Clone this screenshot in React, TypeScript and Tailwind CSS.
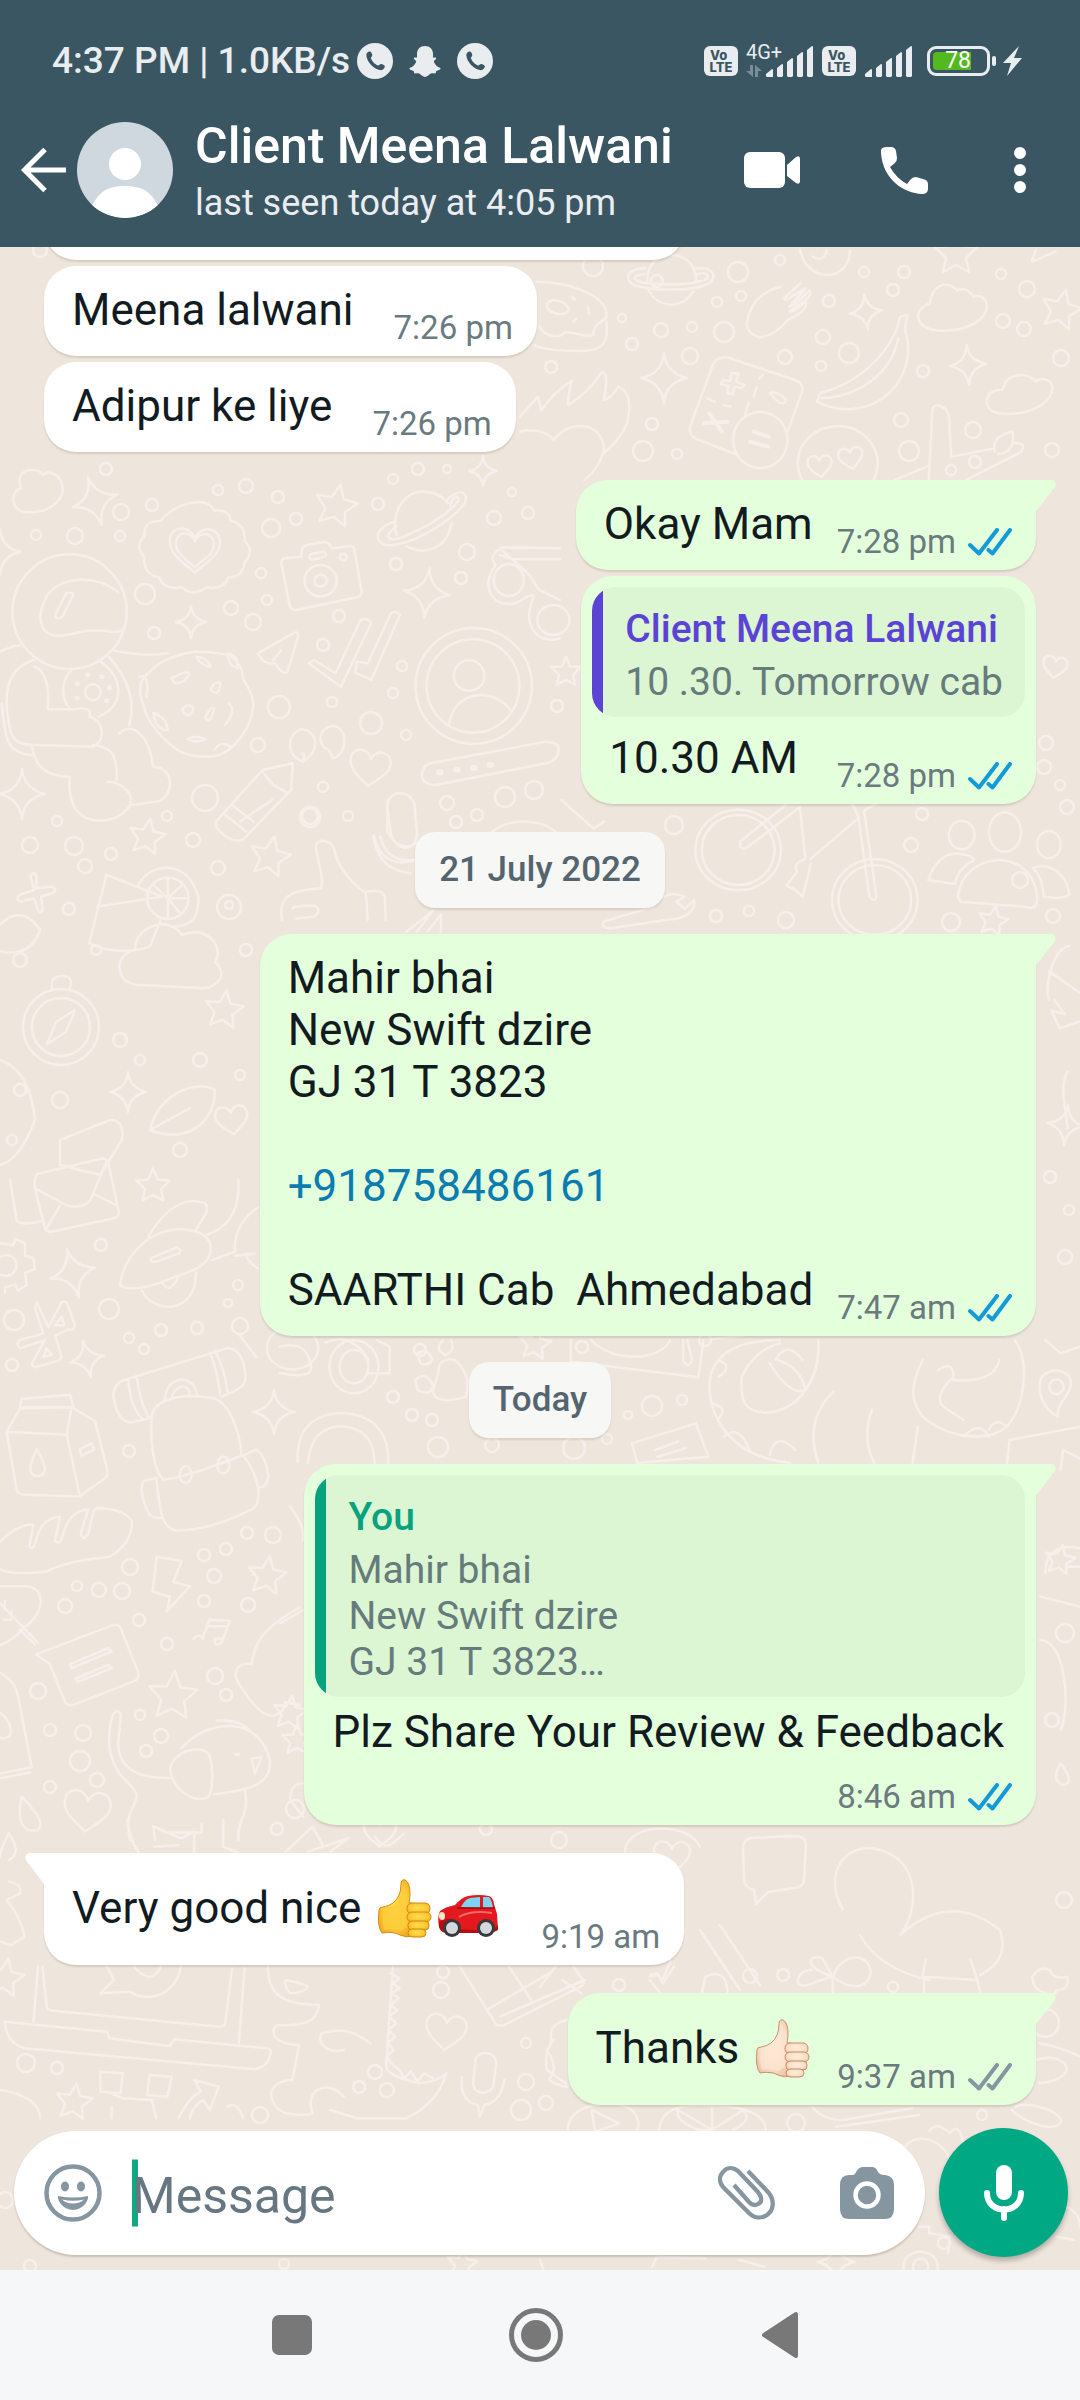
import React from "react";

/* ---------- Wallpaper ---------- */

type Mark = [x: number, y: number, scale: number, turn: number];

const STARS: Mark[] = [
  [336, 506, 1, 12], [147, 837, 0.85, 10], [270, 857, 0.95, 12], [153, 1186, 0.8, 0], [267, 1576, 0.9, 8],
  [173, 1696, 1.15, 4], [297, 1740, 0.7, 0], [1061, 310, 0.95, 14], [956, 254, 1, 0], [993, 921, 0.7, 12],
  [535, 1344, 0.75, 8], [290, 1713, 0.8, 8], [74, 2102, 0.85, 8], [5, 1978, 0.9, 10], [566, 672, 0.7, 0],
  [1060, 1560, 0.7, 10], [462, 2264, 0.7, 8], [224, 1010, 0.9, 8],
];

const SPARKS: Mark[] = [
  [95, 501, 1, -16], [191, 622, 0.65, 0], [427, 593, 1, 6], [22, 794, 1, 0], [483, 471, 0.6, 0],
  [0, 552, 0.9, 0], [73, 1273, 1, -14], [87, 1359, 0.75, -12], [274, 1412, 0.9, 0], [866, 312, 0.7, -6],
  [664, 378, 1, 0], [968, 365, 0.8, -4], [836, 2262, 0.8, 0], [1066, 1125, 0.8, 6], [128, 1092, 0.8, 0],
];

const HEARTS: Mark[] = [
  [370, 768, 1, 6], [446, 2032, 1, 6], [87, 1811, 1.15, 6], [195, 550, 1.25, 0], [195, 550, 0.95, 0],
  [820, 466, 0.6, -6], [851, 458, 0.6, -10], [380, 1832, 0.8, 0], [1055, 667, 0.6, 8], [672, 1857, 0.9, 0],
  [232, 1120, 0.8, -8],
];

const DOTS: [number, number, number][] = [
  [40, 250, 7], [106, 469, 6], [121, 512, 8], [152, 505, 6], [75, 536, 8], [36, 535, 5], [120, 536, 5], [218, 490, 5],
  [246, 486, 7], [278, 497, 6], [271, 528, 9], [296, 519, 6], [145, 594, 10], [261, 573, 5], [231, 608, 7],
  [253, 622, 8], [154, 633, 6], [267, 600, 5], [339, 616, 6], [396, 564, 6], [378, 504, 6], [393, 479, 5],
  [418, 469, 6], [447, 469, 4], [494, 518, 7], [528, 513, 6], [512, 492, 4], [467, 552, 8], [461, 578, 6],
  [323, 645, 6], [402, 666, 5], [393, 693, 5], [332, 702, 5], [279, 707, 11], [371, 723, 11], [406, 735, 5],
  [258, 745, 7], [205, 798, 13], [323, 787, 5], [310, 817, 10], [348, 816, 5], [167, 816, 5], [193, 840, 7],
  [57, 821, 5], [30, 845, 8], [74, 846, 9], [111, 854, 6], [85, 866, 7], [218, 868, 7], [69, 909, 6],
  [505, 797, 10], [534, 790, 9], [447, 803, 7], [456, 822, 6], [477, 815, 6], [229, 907, 12], [229, 905, 4],
  [593, 266, 10], [657, 281, 6], [738, 272, 10], [780, 260, 5], [717, 302, 5], [741, 296, 5], [622, 318, 4],
  [661, 330, 7], [692, 327, 5], [724, 332, 10], [632, 344, 6], [690, 356, 8], [785, 357, 7], [823, 337, 7],
  [849, 353, 10], [821, 366, 5], [829, 301, 6], [864, 272, 5], [904, 272, 6], [893, 290, 6], [1001, 274, 5],
  [1027, 289, 8], [1003, 321, 7], [1024, 329, 7], [1061, 358, 8], [923, 371, 6], [551, 367, 6], [652, 424, 6],
  [643, 451, 10], [677, 454, 5], [901, 420, 7], [973, 430, 8], [909, 451, 10], [1052, 450, 7], [975, 462, 6],
  [951, 470, 5], [1046, 743, 7], [1044, 767, 7], [1060, 785, 5], [1067, 807, 7], [557, 706, 6], [310, 816, 8],
  [674, 825, 9], [911, 845, 7], [922, 814, 6], [716, 916, 6],
  [749, 911, 5], [786, 920, 8], [951, 922, 9], [1053, 916, 7], [1050, 1177, 6], [1069, 1210, 5], [1065, 1257, 7],
  [101, 1245, 6], [109, 1309, 10], [14, 1320, 10], [238, 1285, 5], [228, 1303, 4], [240, 1326, 8], [197, 1328, 6],
  [161, 1330, 6], [129, 1338, 5], [144, 1349, 5], [12, 1365, 6], [129, 1451, 6], [247, 1533, 6], [273, 1535, 8],
  [226, 1549, 6], [204, 1555, 6], [130, 1567, 8], [214, 1576, 7], [77, 1586, 5], [99, 1590, 7], [122, 1591, 8],
  [65, 1606, 7], [204, 1601, 6], [248, 1605, 7], [139, 1620, 6], [167, 1644, 6], [215, 1676, 8], [226, 1695, 6],
  [38, 1691, 8], [140, 1715, 5], [161, 1736, 7], [146, 1751, 6], [50, 1730, 6], [83, 1733, 8], [80, 1761, 10],
  [50, 1787, 6], [97, 1780, 7], [295, 1809, 9], [277, 1829, 6], [393, 1397, 6], [412, 1415, 6], [432, 1420, 6],
  [438, 1447, 10], [492, 1445, 7], [574, 1448, 11], [607, 1439, 5], [628, 1415, 4], [652, 1406, 10], [682, 1400, 5],
  [1065, 1633, 9], [486, 1829, 6], [559, 1840, 8], [443, 1972, 6], [441, 1990, 8],
  [619, 1985, 6], [526, 2043, 5], [26, 2063, 9], [57, 2068, 6], [375, 2072, 7], [359, 2087, 6], [387, 2090, 7],
  [526, 2082, 8], [546, 2103, 7], [521, 2110, 10], [750, 1976, 7], [783, 1975, 6], [893, 1987, 5],
  [796, 2123, 9], [982, 2115, 5], [1045, 2023, 14], [260, 2115, 8], [284, 2264, 5], [30, 2266, 6], [944, 2243, 6],
  [5, 2200, 8], [1064, 1900, 8], [1052, 1720, 7], [705, 1340, 6], [582, 1347, 6], [420, 1350, 6], [1020, 880, 8],
  [20, 960, 7], [96, 950, 5], [120, 1040, 7], [140, 1060, 5], [20, 1090, 6], [60, 1100, 8], [200, 1060, 7],
  [240, 1075, 5], [180, 1150, 7], [12, 1140, 5], [246, 950, 6],
];

const STAR = "M0-22 6-8 21-7 10 4 13 18 0 11-13 18-10 4-21-7-6-8Z";
const SPARK = "M0-25Q2-5 23 0 2 4 0 25-3 4-23 0-2-4 0-25Z";
const HEART = "M0 18C-10 10-22 2-20-9-18-20-4-20 0-9 5-21 20-18 20-6 20 4 9 10 0 18Z";

function Marks({ items, d }: { items: Mark[]; d: string }) {
  return (
    <>
      {items.map(([x, y, s, r], i) => (
        <path key={i} d={d} transform={`translate(${x} ${y}) rotate(${r}) scale(${s})`} />
      ))}
    </>
  );
}

function Wallpaper() {
  return (
    <svg
      aria-hidden="true"
      className="absolute inset-x-0 top-0 h-full w-full [&_*]:[vector-effect:non-scaling-stroke]"
      viewBox="0 247 1080 2023"
      preserveAspectRatio="xMidYMin slice"
      fill="none"
      stroke="#f7efea"
      strokeWidth="2.500"
      strokeLinecap="round"
      strokeLinejoin="round"
    >
      <Marks items={STARS} d={STAR} />
      <Marks items={SPARKS} d={SPARK} />
      <Marks items={HEARTS} d={HEART} />
      {DOTS.map(([x, y, r], i) => (
        <circle key={i} cx={x} cy={y} r={r} />
      ))}

      {/* cloud, cookie, astronaut, camera, planet, glasses */}
      <g transform="translate(0 460) scale(.357 .3333)">
        <path d="M60 85C30 90 22 155 80 157 150 158 185 110 173 70 165 40 130 30 122 45 105 20 55 25 55 60Q55 80 60 85Z" />
        <path d="M545 127q40-5 55 25 45-5 45 30 45 10 40 60 30 30 0 65-5 45-45 45-15 40-60 30-40 30-70 0-50 10-65-30-45-10-40-60-30-30 0-65-5-45 45-45 35-45 95-55Z" />
        <ellipse cx="195" cy="455" rx="160" ry="172" />
        <path d="M330 395C270 345 170 345 130 410 100 470 110 530 170 528 220 520 240 505 310 515q30 5 38-15M185 400q20-5 20 5l-30 65q-20 12-20-5ZM95 600C30 620 5 680 25 790 30 850 60 855 100 855L260 860C300 840 290 780 250 770 260 740 230 745 200 748H133C140 690 130 630 95 620M0 575Q30 560 55 555M320 572Q400 590 470 580M305 590C360 660 380 720 362 795M275 600C350 650 350 740 275 770M200 630C165 670 175 720 195 745M90 855C95 920 130 950 195 950 190 1040 220 1080 280 1083 340 1080 370 1040 367 1015 360 985 330 965 300 965M260 855C310 860 330 880 327 960M335 820C370 780 420 830 428 920 490 920 490 1010 440 1025L370 1035M5 730C15 820 10 880 90 885" />
        <ellipse cx="260" cy="697" rx="22" ry="24" />
        <path d="M245 645h1M285 650h1M306 683h1M216 671h1M215 714h1M298 722h1" strokeWidth="5" />
        <path d="M545 575q50 0 95 10 40 25 40 70 30 50 30 80-5 60-45 110-40 50-90 45-60 0-90-30-70-60-85-130-20-60 15-90 40-50 130-65ZM480 655q45-25 50-15-10 30-40 30ZM590 690q10-30 28-20-5 45-28 20ZM510 750q15-25 33-5-15 40-33 5ZM575 775q15-40 25-30-10 50-25 30ZM525 838q25-15 50 0-25 12-50 0ZM430 760q35 10 40 50-35 0-40-50ZM640 730q25 20-10 65M550 590q30 0 40 30-30-5-40-30ZM640 580q30 10 25 45-30-10-25-45ZM390 650q30-10 20 60M600 870q20-30 45-10" />
        <path d="M800 295 845 290Q840 260 860 255L910 245Q925 250 928 265L980 258Q990 258 993 270L1013 395Q1013 408 1000 412L830 450Q815 450 812 440L788 310Q788 296 800 295ZM870 282 905 275Q920 282 910 290L875 300Q860 295 870 282Z" />
        <ellipse cx="898" cy="362" rx="45" ry="47" />
        <ellipse cx="898" cy="362" rx="17" ry="18" />
        <ellipse cx="962" cy="291" rx="10" ry="10" />
        <path d="M1110 225C1095 150 1135 92 1190 95 1220 95 1240 110 1255 130M1265 190C1250 270 1190 285 1140 260M1105 185C1060 200 1050 230 1065 245 1080 265 1130 255 1185 225 1250 190 1305 140 1305 115 1305 90 1280 90 1250 122M1110 200C1060 240 1100 250 1150 220 1220 190 1290 130 1285 115 1275 100 1260 130 1262 140" />
        <path d="M1568 265 1405 262Q1375 285 1380 300L1388 315C1350 370 1370 435 1430 432 1460 430 1470 405 1495 405 1490 430 1475 460 1485 490 1500 540 1540 545 1568 535M1400 285 1440 298H1568M1405 270 1480 340 1510 390 1568 420" />
        <ellipse cx="1425" cy="360" rx="42" ry="48" />
        <ellipse cx="1550" cy="480" rx="45" ry="45" />
        {/* plane, ticks, avatar, quotes, pencil, thumb, glass */}
        <path d="M722 580 825 518Q838 515 835 530L805 635Q795 645 785 630L770 610 750 610 735 600ZM765 600 788 570" />
        <path d="M865 610 880 600 940 640 1010 480Q1030 470 1040 490L955 680ZM1000 605 1030 610 1095 460Q1110 450 1120 465L1040 660 995 638Z" />
        <ellipse cx="1327" cy="678" rx="163" ry="174" />
        <ellipse cx="1325" cy="678" rx="130" ry="140" />
        <ellipse cx="1314" cy="647" rx="43" ry="46" />
        <path d="M1258 790C1275 690 1380 680 1430 750" />
        <path d="M850 905C800 890 800 820 845 808 890 810 900 880 845 905Q860 880 845 880M932 895Q920 860 910 865C880 830 910 795 935 798 975 805 975 880 932 895Z" />
        <path d="M605 1085 735 930 820 910 815 990 680 1140Q640 1150 605 1100ZM735 935 765 975 800 995M650 1035 710 1085M625 1060 690 1115" />
        <path d="M1185 930Q1190 915 1205 910L1530 845Q1565 845 1565 870 1560 905 1530 910L1220 975C1185 975 1175 950 1185 930Z" />
        <path d="M1230 937h4M1278 929h4M1325 923h4M1372 914h4" strokeWidth="6" />
        <path d="M1085 1045C1080 985 1160 985 1162 1045L1168 1120C1165 1180 1105 1175 1095 1120ZM1045 1130C1060 1220 1110 1235 1150 1240M1065 1130C1080 1190 1110 1205 1165 1200" />
        <path d="M790 1380C780 1310 810 1290 900 1285 910 1250 880 1170 885 1155 895 1135 925 1140 935 1165 945 1220 980 1265 1025 1300L1030 1380M820 1345Q830 1335 880 1338 905 1350 880 1370L830 1375M1025 1295Q1070 1285 1078 1310L1080 1380" />
        <path d="M250 1450 298 1245 455 1310 272 1340M385 1280C420 1200 530 1200 555 1310 560 1380 530 1400 480 1400M250 1450Q330 1490 420 1460L450 1380" />
        <ellipse cx="470" cy="1315" rx="58" ry="62" />
        <path d="M470 1315V1255M470 1315 510 1275M470 1315H528M470 1315 505 1360M470 1315V1378M470 1315 430 1275" />
        <path d="M85 1250Q95 1230 102 1250V1285L145 1280Q165 1290 145 1300L115 1310 120 1350Q110 1365 105 1345L95 1315 60 1325Q40 1320 55 1305L95 1290Z" />
      </g>

      {/* compass, cloud, leaf sprig beside the long message */}
      <circle cx="61" cy="1027" r="38" />
      <circle cx="61" cy="1027" r="29" />
      <path d="M75 1010 66 1032 47 1044 56 1022ZM52 988Q50 976 62 976 74 976 70 988M-5 930Q20 900 40 930 30 960-5 950" />
      <path d="M140 985C115 985 112 955 135 950 135 925 170 915 182 935 205 925 225 945 215 962 230 975 215 990 200 988Z" />
      <path d="M150 1130C160 1090 200 1080 215 1090 215 1120 190 1145 150 1130ZM150 1130 190 1108M0 1060Q30 1070 35 1120 20 1160 0 1165M60 1140 110 1120Q125 1120 122 1140L100 1175 60 1165Z" />

      {/* top right: planet, burger, calculator, banana, clouds, smiley, cactus */}
      <g transform="translate(520 250) scale(.357 .3333)">
        <path d="M357 90C355 40 390 15 430 15 470 20 495 50 493 95M360 120C385 175 455 180 485 125M350 55C300 55 290 90 320 105 370 125 500 125 535 95 555 70 530 50 493 55M350 72C300 80 320 95 360 100 420 105 500 105 525 85 530 70 510 65 495 75" />
        <path d="M45 95C140 95 250 140 242 200 240 215 210 210 205 255 180 265 140 240 125 248 110 265 70 262 55 230M242 215C250 280 230 300 180 303 110 303 60 298 40 285M75 165C80 140 130 150 137 180 130 200 80 195 75 165ZM145 140 155 150M190 172 193 192M150 215 157 207" />
        <path d="M785 100 740 145Q745 155 760 140L800 115 755 170Q770 165 810 122 820 130 800 150 770 170 755 185 770 185 800 155 810 180 750 210 710 260 670 262 635 250 635 220 650 130 730 110 785 100Z" />
        <path d="M540 345Q550 320 580 322L770 390Q795 400 790 425L750 545M610 615 490 565Q470 550 478 525L540 345M592 370 612 370 605 395 630 405 620 415 600 410 595 432 580 430 585 408 562 402 568 390 590 393ZM700 430Q715 420 745 448 745 465 725 458ZM680 375 670 385M662 415 655 440M525 445 545 455M570 465 590 470M640 460 630 495" />
        <ellipse cx="673" cy="570" rx="76" ry="84" />
        <path d="M655 545 697 560M645 575 695 590M530 490 565 545M515 520 580 515" strokeWidth="4" />
        <path d="M1065 200 1085 195 1078 240C1110 330 1060 470 920 478 880 478 850 465 832 455L840 430C950 400 1020 320 1055 240ZM1060 265C1040 370 950 440 845 445" />
        <path d="M1148 160C1100 175 1100 240 1180 242 1260 245 1320 200 1305 155 1295 130 1270 140 1270 140 1250 105 1225 120 1225 120 1190 90 1155 105 1148 160ZM1350 420C1300 415 1290 480 1340 490 1420 500 1500 460 1490 405 1480 380 1450 385 1445 395 1420 360 1360 375 1355 410Z" />
        <ellipse cx="890" cy="640" rx="112" ry="112" />
        <path d="M1145 690 1155 480Q1160 455 1190 475 1205 490 1203 530L1208 620 1330 595M1050 690 1140 650M1330 605C1320 570 1350 550 1380 545 1385 580 1375 610 1340 612M1380 580Q1420 575 1405 605L1250 690" />
        <path d="M0 500 50 440Q55 460 60 482 90 430 145 392 135 430 135 465 190 430 230 365 250 370 235 450 260 440 275 410 320 430 300 520 280 570 235 610M0 545Q60 530 95 570 130 520 190 530 235 550 235 600 220 660 180 690" />
        <path d="M785 0C800 95 920 105 925 0M820 20Q850 40 860 0M1435 30 1445 0M1435 35 1500 5" />
      </g>

      {/* envelope, gear, rocket, milk, backpack, baguette, leaf, note, dog */}
      <g transform="translate(0 1180) scale(.3333 .4209)">
        <path d="M105 20 135 115Q140 125 155 123L345 90Q360 85 355 70L325-40Q320-55 300-50L115-15Q100-10 105 20L200 60Q240 70 270 50L320-45M140 115 180 60M285 35 350 60M30 0 50 95Q60 110 120 98" />
        <path d="M0 150 40 155 45 140 75 150V180L100 185 105 212 75 220 80 250 55 262 45 248 15 255V268M0 182Q45 170 50 205 40 235 0 225" />
        <path d="M360 250C370 190 430 125 530 117 620 115 640 150 630 175 620 205 580 215 520 232 450 255 390 265 360 250ZM445 135C500 60 560 40 615 55 635 70 600 100 588 118M425 262C460 320 590 320 588 220M620 130C700 110 720 60 715 0M635 190 705 170C700 120 740 80 775 65M705 180 765 175 735 175Q750 200 775 210M455 185 530 160Q550 168 535 175L465 195Q445 195 455 185ZM485 242Q510 275 535 230" />
        <path d="M110 290 145 350 185 290Q200 285 205 300L225 345Q220 360 205 355L165 370 185 420Q180 430 165 432L105 445Q90 440 100 430L135 380 60 400Q45 390 60 380L130 365 105 305ZM165 345 185 325 192 345ZM130 420 140 400 155 415Z" />
        <path d="M60 540 65 520 210 510 220 540ZM20 598 60 543 215 540 200 605ZM20 600 50 735Q55 748 75 748L240 752 200 605M220 542 285 573 322 690Q325 705 310 712L240 750M110 640C150 690 135 703 110 703 85 700 85 680 110 640ZM240 640 275 625 283 640 245 655Z" />
        <path d="M340 510Q345 480 375 475L680 400C725 395 740 450 735 480 720 500 690 505 665 515M340 510C345 550 365 580 400 575L455 565M385 475Q390 540 430 570M410 465Q420 530 445 562M630 410Q655 460 660 510M645 405Q675 450 683 505M495 520C500 455 595 465 590 515M515 520C520 485 575 480 568 515" />
        <path d="M455 560C470 510 570 510 640 518 690 530 720 600 725 655 640 680 560 705 490 712 460 690 450 620 455 560ZM470 712C480 800 490 835 540 833 620 830 700 805 760 780 790 760 775 700 730 655M470 708 430 715Q415 740 445 790 455 805 485 803M730 655 770 640Q800 660 805 705 800 730 780 730" />
        <ellipse cx="557" cy="700" rx="18" ry="20" />
        <ellipse cx="670" cy="677" rx="18" ry="20" />
        <path d="M0 860C40 825 90 815 100 820L88 870Q100 885 110 850 130 800 180 800L165 858Q180 870 190 840 210 785 265 783L242 840Q250 860 265 840 280 780 290 780 370 780 395 810 400 860 330 895 200 905 140 930 40 940 0 925" />
        <path d="M0 965H80C140 970 135 1030 70 1065 50 1085 20 1100 0 1105M0 1005 115 1100M60 1070 105 1103M15 1000V1020M35 1025V1045H10" />
        <path d="M470 895 545 905 520 955 570 965 500 1025 510 990 458 978ZM580 1090Q600 1075 608 1090L628 1045 690 1047 665 1100Q640 1110 645 1090L665 1090M625 1060H680" />
        <path d="M108 1127 340 1057Q355 1055 362 1065L415 1170Q418 1185 405 1190L220 1247Q200 1250 195 1240L150 1150ZM210 1150 325 1112 335 1120 215 1160ZM225 1185 325 1152 335 1160 235 1192Z" />
        <path d="M0 1170C40 1190 50 1200 60 1250L95 1395 0 1410M0 1422 90 1407M0 1265Q40 1290 30 1320 15 1330 0 1325" />
        <path d="M755 1150C765 1090 800 1060 900 1015M755 1150C700 1145 700 1180 720 1200 760 1250 790 1275 820 1272 855 1270 855 1240 855 1240L900 1248" />
        <path d="M510 1400C520 1350 620 1340 630 1370 640 1400 640 1460 620 1468 580 1480 520 1450 510 1400ZM545 1350C620 1280 780 1270 810 1380 815 1440 740 1450 640 1460M650 1285Q720 1280 750 1310M515 1420C400 1425 350 1390 355 1330 365 1265 365 1262 350 1262 330 1265 320 1340 335 1370 350 1420 400 1435 410 1460 410 1490 370 1500 390 1568M735 1450C750 1510 710 1520 715 1568M465 1568 460 1535 500 1550H605L605 1530M755 1375 785 1370 765 1410ZM705 1365h12" />
        <path d="M65 1465C120 1510 135 1535 110 1545 65 1550 50 1520 65 1465Z" />
      </g>

      {/* bicycle, people, wrench, bulb */}
      <g transform="translate(240 800) scale(.5357 .357)">
        <ellipse cx="930" cy="140" rx="80" ry="113" />
        <ellipse cx="930" cy="140" rx="68" ry="98" />
        <ellipse cx="1185" cy="280" rx="80" ry="115" />
        <ellipse cx="1185" cy="280" rx="68" ry="98" />
        <path d="M1030 0 935 115Q930 140 945 135L1045 20 1055 160M1140 0 1155 50 1065 165M1155 55 1175 270Q1185 290 1188 270L1165 30 1200 0M1055 165Q1030 180 1040 200L1020 240 1035 250 1050 270 1060 215 1065 180" />
        <ellipse cx="1347" cy="98" rx="24" ry="40" />
        <ellipse cx="1428" cy="90" rx="30" ry="55" />
        <ellipse cx="1510" cy="125" rx="22" ry="38" />
        <path d="M1340 270C1350 140 1480 130 1488 270 1490 300 1480 305 1470 300L1345 285ZM1285 225Q1300 150 1340 150 1370 155 1370 170 1340 190 1335 235ZM1480 190C1520 170 1545 220 1548 265 1540 275 1520 275 1500 270Q1500 220 1480 190Z" />
        <path d="M680 340 770 300Q790 250 830 270L815 285 830 305 848 280Q850 330 800 335L690 360Q670 355 680 340Z" />
        <path d="M0 60 60 0M250 100Q260 170 300 175L330 170M275 0V90Q300 150 330 120M470 90C500 50 560 50 590 90M600 0 660 80 680 60M310 370 360 310 330 370M350 370 375 320V370" />
        <path d="M1510 560C1500 520 1520 410 1548 410M1510 480 1568 540M1520 560 1540 600 1515 590 1530 640 1568 620M1545 760C1530 800 1540 850 1545 920M0 1500 30 1560" />
        <ellipse cx="98" cy="1535" rx="48" ry="60" />
        <path d="M160 1520C200 1490 230 1540 240 1568M880 1510 940 1500M1000 1568Q1020 1510 1050 1568" />
      </g>

      {/* owl, paw, snake, label, pin */}
      <g transform="translate(280 1340) scale(.5102 .3333)">
        <ellipse cx="145" cy="80" rx="48" ry="80" />
        <ellipse cx="145" cy="80" rx="28" ry="50" />
        <path d="M0 20Q50 0 60 70 70 120 0 100M190 0 215 20V100H170M35 365C30 250 80 215 130 220 190 230 215 290 212 368M55 368C60 270 100 255 130 260 170 270 185 310 185 368" />
        <path d="M310 100C310 50 340 50 350 70 370 110 370 130 365 170 320 190 300 180 300 150ZM270 40Q290 20 298 60 290 80 275 70ZM320 0Q300 30 325 45 345 30 335 0M265 120Q290 90 300 140 295 170 270 150Z" />
        <path d="M570 0V65L820 112 830 0M610 0Q640 50 700 50 750 45 765 0M790 0V60Q800 90 808 60L798 0" />
        <path d="M845 100C860 30 910 0 980 0M845 100C830 200 870 350 1000 368M905 110C900 200 920 215 950 218 1020 215 1060 110 1055 0M905 110Q930 30 980 10M960 70Q1000 170 1030 150 1020 80 975 60M1085 155C1040 220 1040 300 1055 368M860 60Q890 80 860 110M845 190Q880 200 860 235M870 290Q900 250 920 330M960 345Q970 270 1010 330" />
        <path d="M1260 60C1230 150 1240 190 1260 230 1310 300 1400 310 1430 250 1460 190 1470 60 1440 0M1290 90Q1320 60 1320 110 1280 170 1300 200 1340 240 1340 240M1320 120Q1400 130 1410 60M1160 210Q1140 300 1165 368M1240 368 1250 260M1390 270Q1400 230 1425 260M1340 290Q1370 240 1390 290" />
        <path d="M1490 120C1500 80 1550 80 1550 130 1550 170 1520 190 1525 230 1500 210 1485 170 1490 120ZM1430 300 1568 260M1425 368 1430 300M1530 390 1535 330 1568 355M1500 0 1530 40 1568 20" />
        <ellipse cx="1522" cy="140" rx="14" ry="22" />
        <path d="M690 310 815 250 840 350 700 368ZM735 330 780 305M740 350 795 325" />
        <path d="M1500 700Q1500 620 1550 620L1568 625M1490 900C1540 900 1550 1100 1530 1170M1530 1270Q1560 1330 1535 1335 1510 1320 1530 1270ZM1490 770 1568 800M1568 680 1540 680M20 500Q50 560 45 600M0 850 45 810M45 1330Q20 1330 20 1380L45 1430" />
      </g>

      {/* greeting bubble and neighbours */}
      <path d="M752 1838 796 1836Q806 1836 806 1846L804 1880Q803 1888 794 1888L768 1892 756 1904 754 1890Q744 1888 744 1878L743 1848Q743 1839 752 1838Z" />
      <path d="M843 1910C820 1870 850 1840 880 1850 920 1860 920 1910 900 1935M900 1935Q950 1890 1000 1930 1010 1960 980 1975M860 1935Q880 1970 930 1980M700 1930 740 1990M720 1925 760 1985" />

      {/* laptop, dinosaur, cake, microphone */}
      <g transform="translate(0 1820) scale(.4464 .3333)">
        <path d="M95 440 105 560Q105 570 120 572L490 620Q505 620 505 605L520 445M85 440 75 605M548 445 535 670M10 605 240 635 245 655 380 678 390 658 600 685Q610 690 605 705 600 740 570 748L55 685Q15 670 10 605ZM240 440 255 480 225 520 290 515C350 560 400 500 405 440M300 440Q340 500 360 440" />
        <path d="M600 440C600 520 630 555 715 555 710 600 690 620 620 615 600 640 620 675 670 675L655 780C600 780 590 850 640 880 690 890 700 880 700 880M700 880C680 800 740 780 770 830M720 640C770 620 800 640 830 670M720 640C710 680 740 700 770 690M880 440 865 740Q870 770 940 790 980 785 1000 760 980 850 910 895L800 895 740 870M875 460 895 475 880 490 895 505 878 520 893 535 875 555 890 570 872 590 888 610 870 630 885 650 868 670 882 690 866 710 880 735 895 750 905 775 920 755 935 785 950 760 970 775M640 480Q680 490 690 500 680 520 650 520 635 500 640 480Z" />
        <path d="M1030 440 1110 610Q1115 620 1130 615L1300 500Q1315 490 1300 470L1285 440M1090 570 1230 460M1120 590 1310 480M1140 440 1190 540M1455 470 1475 465 1485 490 1510 440M1480 520 1455 480" />
        <path d="M1065 720C1070 690 1110 690 1112 730L1105 800C1090 830 1060 820 1060 790ZM1035 770C1030 830 1050 850 1070 855L1075 890 1085 855C1110 850 1125 820 1130 780M1270 600C1210 620 1250 660 1225 690 1250 740 1240 760 1230 780 1250 800 1270 800 1270 800" />
        <path d="M225 755 275 760 270 820 225 815ZM335 765 385 770 375 830 330 825ZM250 820 275 835 340 840M250 860V895M340 840 350 895M400 895C420 840 440 820 450 815L435 780 490 800 470 870 455 840Q430 860 425 895M0 810Q90 830 90 895M510 860Q530 840 545 895" />
        <path d="M285 0Q290 60 310 95M345 20 405 55 435 35V100M345 80 400 75M500 0V80L530 95M690 95 780 55 740 95M640 95 700 20 725 80M840 50Q860 90 880 70L905 40M0 110Q0 90 20 40 50 100 20 120M1400 95C1400 10 1540 0 1568 80M20 185Q50 190 45 220L15 240Q50 300 55 350L25 375 0 365" />
      </g>

      {/* clover, citrus slices, composer surroundings */}
      <g transform="translate(540 1960) scale(.3444 .3333)">
        <path d="M850 50C760 20 780-20 820-5L850 50C880-30 960-20 960 40 950 90 900 90 850 50ZM850 50C800 60 770 90 750 70 745 50 760 30 790 30M850 50V100M1120 0 1110 50 1270 60 1250 0M1115 60V100M1270 65 1280 100M1430 50Q1450 15 1480 30 1490 60 1530 50 1540 90 1500 90 1490 120 1470 100 1430 90 1430 50ZM470 100 480 50Q540 20 545 100M320 45 340 40 355 60 380 0M0 80 60 0M65 60 120 100" />
        <path d="M80 515C80 430 200 420 250 440 290 460 290 500 280 515M150 450 230 490 160 515ZM345 515C350 440 420 430 500 438 600 435 660 470 655 515M500 510 400 450Q390 480 460 510ZM500 510V440M500 510 590 450Q620 480 560 510M790 440Q820 480 880 480L1080 445M860 500 1100 465M1380 440C1420 420 1530 460 1510 490 1480 520 1400 480 1370 450M1130 515Q1150 480 1190 520 1220 480 1230 560M1060 560C1100 510 1190 540 1200 640" />
        <path d="M1100 800 1130 800V820L1190 830 1185 880M1440 300Q1500 280 1530 320 1530 360 1450 370M1450 250Q1510 260 1568 290M1530 740Q1568 760 1568 800M1500 830 1550 840" />
        <ellipse cx="1105" cy="920" rx="50" ry="45" />
        <ellipse cx="1105" cy="920" rx="22" ry="24" />
        <path d="M325 920 340 890 480 895M580 900 650 920M0 900 10 930M40 240Q10 270 20 330L75 370" />
      </g>
    </svg>
  );
}

/* ---------- Status bar ---------- */

function CallBadge() {
  return (
    <svg className="h-9 w-9" viewBox="0 0 36 36" aria-hidden="true">
      <circle cx="18" cy="18" r="18" fill="#e9edf0" />
      <g transform="translate(5 5) scale(1.08)">
        <path
          d="M7 3.2C8.4 3 9.3 4.800 9.500 6.500 9.600 7.700 8.300 8.500 8.200 9.300 9 12 12 15.300 14.900 16.200 16 16.200 16.600 14.800 17.800 14.900 19.400 15.200 21 16 21.200 17.200 21 18.800 19.600 20.300 17.800 20.500 11.500 20.300 3.800 12.500 4 6.200 4.200 4.500 5.500 3.300 7 3.200Z"
          fill="#3b5663"
        />
      </g>
    </svg>
  );
}

function Ghost() {
  return (
    <svg className="h-9 w-9" viewBox="0 0 36 36" aria-hidden="true">
      <path
        d="M18 3C23 3 26 6.500 26 11V14.500C27.200 15 28.500 14 29.200 15 29.600 16.200 26.800 17.400 26.800 18.600 27.600 21.500 30 24 33.500 25 34.200 26.800 29.500 27.600 29.200 28.200 28.800 29 29 30.200 28.200 30.400 26.500 30.300 25 29.900 23.400 30.800 21.600 32 20.200 34 18 34 15.800 34 14.400 32 12.600 30.800 11 29.900 9.500 30.300 7.800 30.400 7 30.200 7.200 29 6.800 28.200 6.500 27.600 1.800 26.800 2.500 25 6 24 8.400 21.500 9.200 18.600 9.200 17.400 6.400 16.200 6.800 15 7.500 14 8.800 15 10 14.500V11C10 6.500 13 3 18 3Z"
        fill="#e9edf0"
      />
    </svg>
  );
}

function Volte() {
  return (
    <span className="flex h-[30px] w-[34px] flex-col justify-center rounded-md bg-[#e9edf0] font-['Inter'] text-[13px] leading-[12px] font-extrabold text-[#3b5663]">
      <span className="pl-[6px]">Vo</span>
      <span className="text-center">LTE</span>
    </span>
  );
}

function SignalBars() {
  return (
    <svg className="h-[31px] w-12" viewBox="0 0 48 31" fill="#e9edf0" aria-label="Signal">
      <path d="M0 28 6 23Q7 23 7 24V31H1Q0 31 0 30Z" />
      <path d="M11 22 16 18Q17 18 17 19V30L16 31H12L11 30Z" />
      <path d="M21 16 26 12Q27 12 27 13V30L26 31H22L21 30Z" />
      <path d="M31 10 36 6Q37 6 37 7V30L36 31H32L31 30Z" />
      <path d="M41 4 46 0Q47 0 47 1V30L46 31H42L41 30Z" />
    </svg>
  );
}

function StatusBar() {
  return (
    <div className="flex h-[116px] items-center justify-between pt-[6px] pr-[57px] pl-[52px] text-[#e9edf0]">
      <div className="flex items-center">
        <span className="text-[37px] leading-[42px] font-medium whitespace-nowrap">4:37 PM | 1.0KB/s</span>
        <span className="ml-[7px] flex items-center gap-[14px]">
          <CallBadge />
          <Ghost />
          <CallBadge />
        </span>
      </div>
      <div className="flex items-center">
        <Volte />
        <div className="ml-2 flex items-end">
          <div className="relative flex h-[31px] w-5 items-end">
            <span className="absolute -top-1 left-0 text-[20px] leading-[20px]">4G+</span>
            <svg className="h-3 w-4" viewBox="0 0 16 12" fill="#7b8d98" aria-hidden="true">
              <path d="M4 0H7V12L0 6H4ZM9 12V0L16 6H12V12Z" />
            </svg>
          </div>
          <SignalBars />
        </div>
        <span className="ml-2">
          <Volte />
        </span>
        <span className="ml-[9px]">
          <SignalBars />
        </span>
        <span className="ml-[14px] flex h-[30px] w-[63px] items-center rounded-[9px] border-[3px] border-[#e9edf0] p-[3px]">
          <span className="flex h-[18px] w-[38px] items-center justify-end rounded-l-sm bg-[#54b91f] text-[23px] leading-[18px] text-white">
            78
          </span>
        </span>
        <span className="ml-[2px] h-[10px] w-1 rounded-sm bg-[#e9edf0]" />
        <svg className="ml-[7px] h-[30px] w-5" viewBox="0 0 20 30" fill="#e9edf0" aria-label="Charging">
          <path d="M16 0 0 17H8L4 30 19 12H11Z" />
        </svg>
      </div>
    </div>
  );
}

/* ---------- Chat header ---------- */

function ChatHeader() {
  return (
    <div className="flex items-center pr-3 pb-[23px] pl-[18px]">
      <button type="button" aria-label="Back" className="flex w-[52px] shrink-0 items-center">
        <svg className="h-[48px] w-[48px]" viewBox="0 0 48 48" fill="none" stroke="#fff" strokeWidth="5" aria-hidden="true">
          <path d="M48 24H8M27 3.500 6.500 24 27 44.500" />
        </svg>
      </button>
      <svg className="ml-[7px] h-24 w-24 shrink-0 rounded-full bg-[#cfd8df]" viewBox="0 0 96 96" fill="#fff" role="img" aria-label="Profile photo">
        <circle cx="48" cy="42" r="16" />
        <path d="M15 84C22 70 30 64 48 64S74 70 81 84Q66 96 48 96T15 84Z" />
      </svg>
      <div className="ml-[22px] min-w-0 flex-1">
        <h1 className="truncate text-[50px] leading-[60px] font-medium text-white">Client Meena Lalwani</h1>
        <p className="mt-[6px] truncate text-[36px] leading-[42px] text-[#e9edf0]">last seen today at 4:05 pm</p>
      </div>
      <button type="button" aria-label="Video call" className="flex w-[60px] shrink-0 justify-center">
        <svg className="h-[38px] w-[56px]" viewBox="0 0 56 38" fill="#fff" aria-hidden="true">
          <rect x="0" y="1" width="41" height="36" rx="6" />
          <path d="M43 14 52 6Q56 4 56 8V30Q56 34 52 32L43 25Z" />
        </svg>
      </button>
      <button type="button" aria-label="Voice call" className="ml-[72px] flex w-[60px] shrink-0 justify-center">
        <svg className="h-12 w-12" viewBox="0 0 48 48" fill="#fff" aria-hidden="true">
          <path d="M1 7Q0 1 6 1H11Q15 1 16 5L17 12Q17 15 15 17L10 21Q16 32 27 38L31 33Q33 31 36 31L43 33Q48 34 48 38V43Q48 48 42 48C24 47 3 34 1 7Z" />
        </svg>
      </button>
      <button type="button" aria-label="More options" className="ml-[38px] flex w-[96px] shrink-0 justify-center">
        <svg className="h-12 w-3" viewBox="0 0 12 48" fill="#fff" aria-hidden="true">
          <circle cx="6" cy="7" r="6" />
          <circle cx="6" cy="24" r="6" />
          <circle cx="6" cy="41" r="6" />
        </svg>
      </button>
    </div>
  );
}

/* ---------- Emoji ---------- */

function ThumbEmoji({ pale = false }: { pale?: boolean }) {
  const id = pale ? "thumb-pale" : "thumb-gold";
  const line = pale ? "#c98f6d" : "#d98a12";
  return (
    <svg className="h-[62px] w-[62px] shrink-0" viewBox="0 0 62 62" role="img" aria-label="thumbs up">
      <defs>
        <radialGradient id={id} cx="0.5" cy="0.45" r="0.65">
          <stop offset="0" stopColor={pale ? "#fdeedd" : "#ffdf4f"} />
          <stop offset="0.6" stopColor={pale ? "#fae0c9" : "#fbc936"} />
          <stop offset="1" stopColor={pale ? "#e9bd9d" : "#eda41e"} />
        </radialGradient>
      </defs>
      <g fill={`url(#${id})`} stroke={line} strokeWidth="1">
        <path d="M6 33Q6 30 10 30 22 28 26 18 28 14 28 7C28 1 33 2 35 6 38 13 37 20 36 26H40V59Q33 61 27 58 20 54 9 56 4 50 6 33Z" />
        <rect x="34" y="26" width="23" height="11" rx="5" />
        <rect x="34" y="35" width="24" height="10" rx="5" />
        <rect x="35" y="44" width="21" height="9" rx="4" />
        <rect x="35" y="52" width="18" height="8" rx="4" />
      </g>
      <path d="M11 33Q22 30 28 19L32 28 34 50 27 54Q18 51 11 53Q8 45 11 33Z" fill={pale ? "#fce5d1" : "#fdcd3b"} opacity="0.8" />
    </svg>
  );
}

function CarEmoji() {
  return (
    <svg className="h-[62px] w-[66px] shrink-0" viewBox="0 0 66 62" role="img" aria-label="car">
      <path d="M4 50Q2 40 5 34 10 30 20 28 27 20 33 19 44 17 54 19 58 20 59 27L62 37 63 52 57 55 14 55Z" fill="#e3191e" />
      <path d="M4 45 12 42Q19 40 23 52L42 53Q44 42 51 42 57 42 60 51L63 48V53L57 56H10Q4 54 4 49Z" fill="#b60d12" />
      <path d="M26 30Q30 22 35 21L45 20V31ZM48 20H54Q57 23 58 31H48Z" fill="#7fd3f2" />
      <path d="M22 31H60" stroke="#9c0a0f" strokeWidth="1.500" />
      <ellipse cx="7" cy="39" rx="3" ry="4" fill="#ffe7c7" />
      <path d="M24 40Q36 33 57 36" stroke="#f9686a" strokeWidth="2" fill="none" />
      <circle cx="17" cy="51" r="9" fill="#3a3a3d" />
      <circle cx="17" cy="51" r="6" fill="#d5d8dc" />
      <circle cx="51" cy="51" r="9" fill="#3a3a3d" />
      <circle cx="51" cy="51" r="6" fill="#d5d8dc" />
    </svg>
  );
}

/* ---------- Messages ---------- */

function Ticks({ read }: { read: boolean }) {
  return (
    <svg
      className={read ? "h-7 w-[44px] text-[#129bd8]" : "h-7 w-[44px] text-[#8696a0]"}
      viewBox="0 0 44 28"
      fill="none"
      stroke="currentColor"
      strokeWidth="4"
      strokeLinejoin="round"
      strokeLinecap="round"
      role="img"
      aria-label={read ? "Read" : "Delivered"}
    >
      <path d="M2 17 11 25.500 29 2M20.500 22 24.500 25.500 42 2" />
    </svg>
  );
}

function Stamp({ time, status }: { time: string; status?: "read" | "delivered" }) {
  return (
    <span className="flex shrink-0 items-center gap-3 text-[33px] leading-[38px] whitespace-nowrap text-[#6a7b80]">
      <time>{time}</time>
      {status && <Ticks read={status === "read"} />}
    </span>
  );
}

function Tail({ side }: { side: "in" | "out" }) {
  return side === "out" ? (
    <svg className="absolute top-0 -right-5 h-[34px] w-[21px]" viewBox="0 0 21 34" fill="#e4ffdb" aria-hidden="true">
      <path d="M0 0H17Q22 2 20 7L1 31V34H0Z" />
    </svg>
  ) : (
    <svg className="absolute top-0 -left-5 h-[34px] w-[21px]" viewBox="0 0 21 34" fill="#fff" aria-hidden="true">
      <path d="M21 0H5Q0 2 2 7L20 31V34H21Z" />
    </svg>
  );
}

function Bubble({ side, tail = false, children }: { side: "in" | "out"; tail?: boolean; children: React.ReactNode }) {
  const base = "relative w-fit max-w-full rounded-[32px] shadow-[0_2px_2px_rgba(60,40,20,0.14)]";
  const look =
    side === "in"
      ? tail ? "self-start bg-white rounded-tl-none" : "self-start bg-white"
      : tail ? "self-end bg-[#e4ffdb] rounded-tr-none" : "self-end bg-[#e4ffdb]";
  return (
    <article className={`${base} ${look}`}>
      {tail && <Tail side={side} />}
      {children}
    </article>
  );
}

const BODY = "text-[44px] leading-[52px] text-[#111b21]";

function Quote({ name, mine = false, children }: { name: string; mine?: boolean; children: React.ReactNode }) {
  return (
    <blockquote className="flex overflow-hidden rounded-[24px] bg-[#dcf5d3]">
      <span className={mine ? "w-[11px] shrink-0 bg-[#06a37e]" : "w-[11px] shrink-0 bg-[#5b43d6]"} />
      <div className="px-[22px] pt-[19px] pb-3 text-[39px] leading-[46px] whitespace-pre-line text-[#667b7c]">
        <cite className={mine ? "mb-[7px] block font-medium not-italic text-[#06a37e]" : "mb-[7px] block font-medium not-italic text-[#5b43d6]"}>
          {name}
        </cite>
        {children}
      </div>
    </blockquote>
  );
}

function DatePill({ children }: { children: React.ReactNode }) {
  return (
    <p className="self-center rounded-[20px] bg-[#f7f7f5] px-6 py-4 text-[35px] leading-[44px] font-medium text-[#54656f] shadow-[0_2px_2px_rgba(60,40,20,0.12)]">
      {children}
    </p>
  );
}

function Conversation() {
  return (
    <section aria-label="Messages" className="flex flex-col px-11">
      <div className="-mt-[77px] h-[90px] w-[641px] max-w-full rounded-[32px] bg-white shadow-[0_2px_2px_rgba(60,40,20,0.14)]" />

      <div className="mt-[6px] flex flex-col gap-[6px]">
        <Bubble side="in">
          <div className="flex items-end gap-10 pt-[18px] pr-6 pb-[9px] pl-7">
            <p className={`${BODY} pb-[11px]`}>Meena lalwani</p>
            <Stamp time="7:26 pm" />
          </div>
        </Bubble>
        <Bubble side="in">
          <div className="flex items-end gap-10 pt-[18px] pr-6 pb-[9px] pl-7">
            <p className={`${BODY} pb-[11px]`}>Adipur ke liye</p>
            <Stamp time="7:26 pm" />
          </div>
        </Bubble>
      </div>

      <div className="mt-7 flex flex-col gap-[6px]">
        <Bubble side="out" tail>
          <div className="flex items-end justify-between gap-6 pt-[18px] pr-6 pb-[9px] pl-7">
            <p className={`${BODY} pb-[11px]`}>Okay Mam</p>
            <Stamp time="7:28 pm" status="read" />
          </div>
        </Bubble>
        <Bubble side="out">
          <div className="px-[11px] pt-[11px]">
            <Quote name="Client Meena Lalwani">10 .30. Tomorrow cab</Quote>
          </div>
          <div className="flex items-end justify-between gap-6 pt-[15px] pr-6 pb-[9px] pl-7">
            <p className={`${BODY} pb-[11px]`}>10.30 AM</p>
            <Stamp time="7:28 pm" status="read" />
          </div>
        </Bubble>
      </div>

      <div className="mt-7 flex flex-col gap-[26px]">
        <DatePill>21 July 2022</DatePill>
        <Bubble side="out" tail>
          <div className="flex items-end justify-between gap-6 pt-[18px] pr-6 pb-[9px] pl-7">
            <p className={`${BODY} pb-[11px] whitespace-pre-wrap`}>
              {"Mahir bhai\nNew Swift dzire\nGJ 31 T 3823\n\n"}
              <a href="tel:+918758486161" className="text-[#0a7cb0]">
                +918758486161
              </a>
              {"\n\nSAARTHI Cab  Ahmedabad"}
            </p>
            <Stamp time="7:47 am" status="read" />
          </div>
        </Bubble>
        <DatePill>Today</DatePill>
        <Bubble side="out" tail>
          <div className="px-[11px] pt-[11px]">
            <Quote name="You" mine>
              {"Mahir bhai\nNew Swift dzire\nGJ 31 T 3823…"}
            </Quote>
          </div>
          <div className="flex flex-col gap-5 pt-[9px] pr-6 pb-[9px] pl-7">
            <p className={`${BODY} pr-2`}>Plz Share Your Review &amp; Feedback</p>
            <span className="self-end">
              <Stamp time="8:46 am" status="read" />
            </span>
          </div>
        </Bubble>
      </div>

      <div className="mt-7 flex flex-col gap-7">
        <Bubble side="in" tail>
          <div className="flex items-end gap-10 pt-[18px] pr-6 pb-[9px] pl-7">
            <p className={`${BODY} flex h-[85px] items-center pb-[11px]`}>
              <span className="mr-3">Very good nice</span>
              <ThumbEmoji />
              <CarEmoji />
            </p>
            <Stamp time="9:19 am" />
          </div>
        </Bubble>
        <Bubble side="out" tail>
          <div className="flex items-end justify-between gap-6 pt-[18px] pr-6 pb-[9px] pl-7">
            <p className={`${BODY} flex h-[85px] items-center pb-[11px]`}>
              <span className="mr-3">Thanks</span>
              <ThumbEmoji pale />
            </p>
            <Stamp time="9:37 am" status="delivered" />
          </div>
        </Bubble>
      </div>
    </section>
  );
}

/* ---------- Composer ---------- */

function Composer() {
  return (
    <form className="flex items-center gap-[14px] pr-3 pb-[13px] pl-[14px]" onSubmit={(e) => e.preventDefault()}>
      <div className="flex h-[124px] min-w-0 flex-1 items-center rounded-full bg-white px-[30px] shadow-[0_2px_2px_rgba(60,40,20,0.2)]">
        <button type="button" aria-label="Emoji" className="shrink-0">
          <svg className="h-[58px] w-[58px]" viewBox="0 0 58 58" fill="none" aria-hidden="true">
            <circle cx="29" cy="29" r="26.500" stroke="#8696a0" strokeWidth="4.500" />
            <ellipse cx="21" cy="22.500" rx="4" ry="5" fill="#8696a0" />
            <ellipse cx="37" cy="22.500" rx="4" ry="5" fill="#8696a0" />
            <path d="M14 32Q29 35 44 32C45 37 38 46 29 46S13 37 14 32Z" fill="#8696a0" />
            <path d="M18 35.500Q29 38 40 35.500Q36 39.500 29 39.500T18 35.500Z" fill="#fff" />
          </svg>
        </button>
        <div className="relative ml-[30px] min-w-0 flex-1">
          <span className="absolute top-1/2 left-0 h-[67px] w-[6px] -translate-y-1/2 bg-[#10a783]" />
          <input
            type="text"
            aria-label="Message"
            placeholder="Message"
            className="relative block w-full bg-transparent pt-[6px] text-[50px] leading-[60px] text-[#111b21] caret-[#10a783] outline-none placeholder:text-[#667781]"
          />
        </div>
        <button type="button" aria-label="Attach" className="shrink-0">
          <svg className="h-14 w-[58px]" viewBox="0 0 58 56" fill="none" stroke="#8696a0" strokeWidth="4.300" strokeLinejoin="round" aria-hidden="true">
            <path d="M31 6 51 27C58 35 57 45 50 50 44 54 37 53 32 48L6 22C2 17 2 11 6 7 10 2 16 2 21 6L40 26C46 33 45 37 41 39 38 41 35 40 32 37L17 20" />
          </svg>
        </button>
        <button type="button" aria-label="Camera" className="ml-16 shrink-0">
          <svg className="h-[54px] w-[56px]" viewBox="0 0 56 54" aria-hidden="true">
            <path d="M10 9H13Q16 9 17 6 20 1 24 1H33Q37 1 39 6 41 9 44 9H46Q55 10 55 19V43Q55 53 46 53H10Q1 53 1 43V19Q1 9 10 9Z" fill="#8696a0" />
            <circle cx="28" cy="29" r="11.500" fill="none" stroke="#fff" strokeWidth="4.500" />
          </svg>
        </button>
      </div>
      <button
        type="button"
        aria-label="Record voice message"
        className="flex h-[129px] w-[129px] shrink-0 items-center justify-center rounded-full bg-[#01a884] shadow-[0_4px_5px_rgba(0,0,0,0.25)]"
      >
        <svg className="h-[58px] w-10" viewBox="0 0 40 58" fill="none" stroke="#fff" strokeLinecap="round" aria-hidden="true">
          <rect x="12" y="1" width="16" height="35" rx="8" fill="#fff" stroke="none" />
          <path d="M3 29C3 51 37 51 37 29M20 45V54" strokeWidth="6" />
        </svg>
      </button>
    </form>
  );
}

function NavBar() {
  return (
    <nav aria-label="System" className="flex h-[130px] items-center justify-center bg-[#f6f7f9] pr-2">
      <button type="button" aria-label="Recent apps" className="flex w-[244px] justify-center">
        <span className="block h-10 w-10 rounded-[7px] bg-[#787878]" />
      </button>
      <button type="button" aria-label="Home" className="flex w-[244px] justify-center">
        <span className="flex h-[54px] w-[54px] items-center justify-center rounded-full border-[5px] border-[#787878]">
          <span className="block h-[30px] w-[30px] rounded-full bg-[#787878]" />
        </span>
      </button>
      <button type="button" aria-label="Back" className="flex w-[244px] justify-center">
        <svg className="h-12 w-[38px]" viewBox="0 0 38 48" fill="#787878" stroke="#787878" strokeWidth="4" strokeLinejoin="round" aria-hidden="true">
          <path d="M3 24 35 3V45Z" />
        </svg>
      </button>
    </nav>
  );
}

export default function App() {
  return (
    <div className="flex min-h-screen flex-col bg-[#eee6dd] font-['Roboto',sans-serif]">
      <header className="bg-[#3b5663]">
        <StatusBar />
        <ChatHeader />
      </header>
      <main className="relative flex flex-1 flex-col justify-between overflow-hidden">
        <Wallpaper />
        <div className="relative">
          <Conversation />
        </div>
        <div className="relative pt-[22px]">
          <Composer />
        </div>
      </main>
      <NavBar />
    </div>
  );
}
